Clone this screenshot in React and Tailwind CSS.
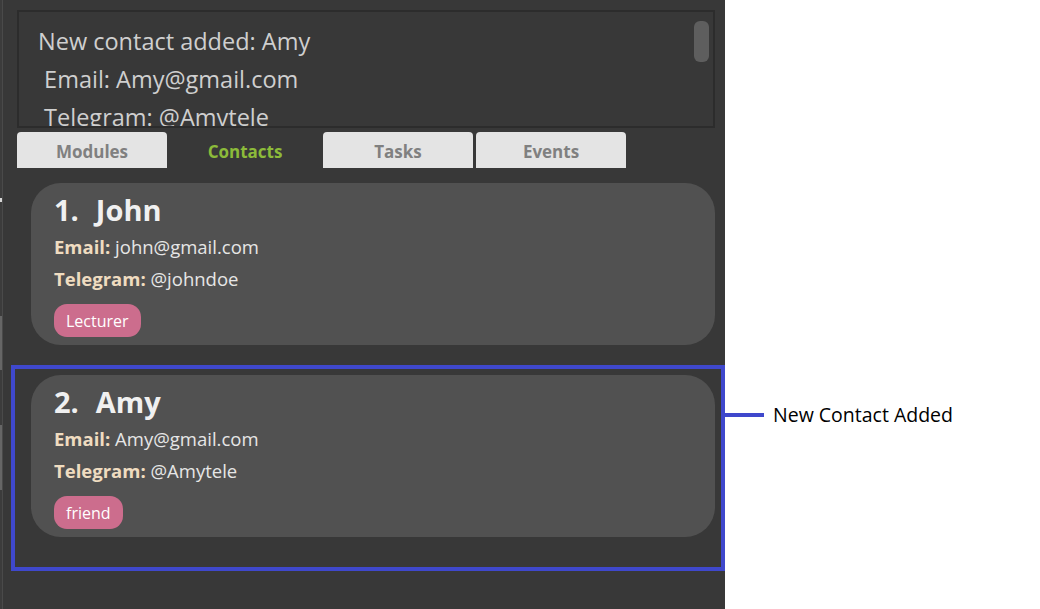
import React from "react";

const contacts = [
  { n: 1, name: "John", email: "john@gmail.com", tele: "@johndoe", tag: "Lecturer" },
  { n: 2, name: "Amy", email: "Amy@gmail.com", tele: "@Amytele", tag: "friend" },
];

function Card({ c }) {
  return (
    <div className="w-[684px] rounded-[30px] bg-[#515151] pt-[8px] pb-[8px] pl-[23px] pr-[20px] flex flex-col">
      <div className="h-[40px] pb-[3px] flex items-center text-[29px] font-bold text-[#f0f0f0] whitespace-pre leading-none">
        <span>{c.n + "."}</span>
        <span className="ml-[17px]">{c.name}</span>
      </div>
      <div className="h-[32px] leading-[32px] text-[18.5px] text-[#e6e6e6] whitespace-pre">
        <span className="font-bold text-[#efdcc0]">Email:</span>{" " + c.email}
      </div>
      <div className="h-[32px] leading-[32px] text-[18.5px] text-[#e6e6e6] whitespace-pre">
        <span className="font-bold text-[#efdcc0]">Telegram:</span>{" " + c.tele}
      </div>
      <div className="mt-[9px] flex">
        <div className="h-[33px] px-[12px] rounded-[13px] bg-[#cc6d8d] text-white text-[16px] flex items-center">
          {c.tag}
        </div>
      </div>
    </div>
  );
}

export default function App() {
  const font = { fontFamily: '"Open Sans", "Noto Sans", sans-serif' };
  return (
    <div className="w-[1040px] h-[609px] bg-white flex relative" style={font}>
      <div className="w-[725px] h-full bg-[#383838] flex">
        {/* left edge strip */}
        <div className="w-[3px] h-full bg-[#3c3c3c] border-r border-[#4a4a4a] flex flex-col">
          <div className="h-[198px]" />
          <div className="h-[4px] bg-[#d8d8d8]" />
          <div className="h-[114px]" />
          <div className="h-[54px] bg-[#666666]" />
          <div className="h-[55px]" />
          <div className="h-[65px] bg-[#666666]" />
        </div>
        <div className="flex-1 flex flex-col pl-[14px]">
          {/* result display */}
          <div className="mt-[10px] w-[698px] h-[118px] border-2 border-[#2c2c2c] bg-[#383838] relative overflow-hidden pl-[19px] pt-[10px]">
            <div className="text-[23.5px] leading-[38px] text-[#cfcfcf] whitespace-pre">
              <div>New contact added: Amy</div>
              <div> Email: Amy@gmail.com</div>
              <div> Telegram: @Amytele</div>
            </div>
            <div className="absolute right-[4px] top-[9px] w-[15px] h-[41px] rounded-[6px] bg-[#5e5e5e]" />
          </div>
          {/* tabs */}
          <div className="mt-[4px] flex gap-[3px] h-[36px]">
            {["Modules", "Contacts", "Tasks", "Events"].map((t) => (
              <div
                key={t}
                className={
                  t === "Contacts"
                    ? "w-[150px] h-full pt-[3px] flex items-center justify-center text-[17px] font-bold text-[#8cbb3a] bg-[#383838]"
                    : "w-[150px] h-full pt-[3px] flex items-center justify-center text-[17px] font-bold text-[#808080] bg-[#e4e4e4] rounded-t-[4px]"
                }
              >
                {t}
              </div>
            ))}
          </div>
          {/* list */}
          <div className="mt-[15px] pl-[14px] flex flex-col gap-[30px]">
            {contacts.map((c) => (
              <Card key={c.n} c={c} />
            ))}
          </div>
        </div>
      </div>
      {/* annotation overlay */}
      <div className="absolute left-[11px] top-[365px] w-[714px] h-[206px] border-4 border-[#3f48cc]" />
      <div className="absolute left-[725px] top-[413px] w-[39px] h-[4px] bg-[#3f48cc]" />
      <div className="absolute left-[773px] top-[402px] h-[26px] flex items-center text-[19.5px] text-black whitespace-nowrap">
        New Contact Added
      </div>
    </div>
  );
}
